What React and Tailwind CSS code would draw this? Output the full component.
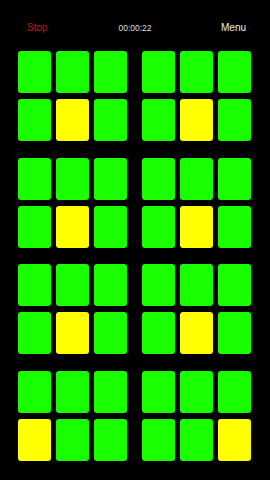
const G = "#19ff00";
const Y = "#ffff00";

// index of the yellow cell in each 3x2 block (0-5, row major)
const blocks = [4, 4, 4, 4, 4, 4, 3, 5];

function Block({ lit }) {
  return (
    <div className="grid grid-cols-3 gap-x-[5px] gap-y-[6px]">
      {[0, 1, 2, 3, 4, 5].map((i) => (
        <div
          key={i}
          className={
            "w-[33px] h-[42px] rounded-[3px] " +
            (i === lit ? "bg-[#ffff00]" : "bg-[#19ff00]")
          }
        />
      ))}
    </div>
  );
}

export default function App() {
  return (
    <div
      className="w-[270px] h-[480px] bg-black overflow-hidden"
      style={{ fontFamily: '"Liberation Sans", Arial, sans-serif' }}
    >
      <div className="h-[51px] pt-[21px] pl-[27px] pr-[24px] flex items-start leading-[14px]">
        <div className="flex-1 text-[10px] text-[#c41a1a]">Stop</div>
        <div className="text-[8.5px] text-[#dddddd] -ml-[3px]">00:00:22</div>
        <div className="flex-1 text-right text-[10px] text-[#eeeeee]">Menu</div>
      </div>
      <div className="px-[18px] grid grid-cols-2 gap-x-[15px] gap-y-[16.5px] w-fit">
        {blocks.map((lit, i) => (
          <Block key={i} lit={lit} />
        ))}
      </div>
    </div>
  );
}
